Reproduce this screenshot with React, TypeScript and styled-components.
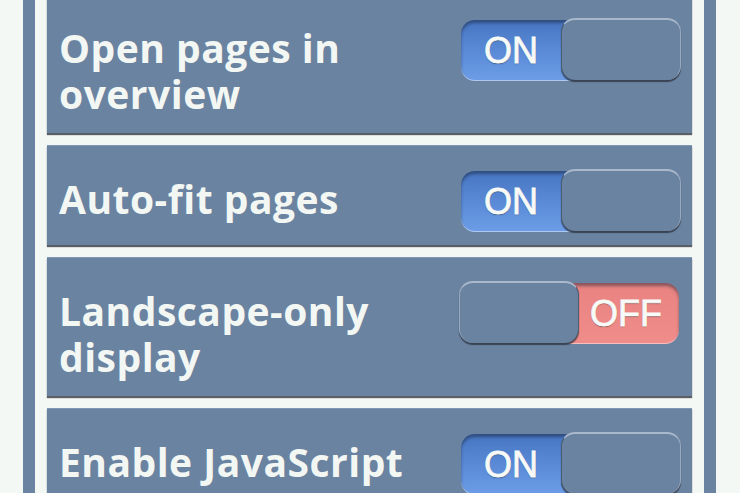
import styled, { createGlobalStyle } from 'styled-components';

const GlobalStyle = createGlobalStyle`
  html, body {
    margin: 0;
    padding: 0;
    background: #f4f8f5;
    overflow: hidden;
  }
  #root {
    height: 493px;
    overflow: hidden;
  }
`;

const Page = styled.div`
  height: 493px;
  margin: 0 24px 0 23px;
  padding: 0 12px;
  border-left: 12px solid #6a83a1;
  border-right: 12px solid #6a83a1;
  background: #f4f8f5;
  overflow: hidden;
`;

const List = styled.div`
  display: flex;
  flex-direction: column;
  gap: 12px;
  margin-top: -6px;
`;

const Card = styled.div`
  display: flex;
  justify-content: space-between;
  align-items: flex-start;
  padding: 24px 11px 13px 12px;
  background: #6a83a1;
  box-shadow: inset 0 1px 0 #8196b0, 0 2px 1px rgba(40, 44, 50, 0.75);
`;

const Label = styled.div`
  padding: 7px 0 3px;
  font-family: 'Open Sans', 'Noto Sans', sans-serif;
  font-weight: 700;
  font-size: 39px;
  letter-spacing: 0.5px;
  line-height: 46px;
  color: #f3f7f3;
  max-width: 380px;
`;

const Switch = styled.div<{ $on: boolean }>`
  display: flex;
  flex-direction: ${({ $on }) => ($on ? 'row' : 'row-reverse')};
  align-items: flex-start;
  flex: none;
  width: 220px;
  height: 63px;
  margin-right: ${({ $on }) => ($on ? '0' : '2px')};
`;

const Track = styled.div<{ $on: boolean }>`
  position: relative;
  z-index: 0;
  width: 110px;
  height: 61px;
  margin-top: 2px;
  box-sizing: border-box;
  display: flex;
  align-items: center;
  justify-content: ${({ $on }) => ($on ? 'flex-start' : 'flex-end')};
  padding: ${({ $on }) => ($on ? '0 0 0 23px' : '0 17px 0 0')};
  border-radius: ${({ $on }) => ($on ? '14px 0 0 14px' : '0 14px 14px 0')};
  background: ${({ $on }) =>
    $on
      ? 'linear-gradient(180deg, #4674c0 0%, #5a8ad6 50%, #6c9de6 100%)'
      : 'linear-gradient(180deg, #e88381 0%, #f08c89 100%)'};
  box-shadow: inset 0 3px 3px rgba(20, 30, 50, 0.45),
    inset 0 -1px 0 rgba(255, 255, 255, 0.45);
  font-family: 'Liberation Sans', Arial, sans-serif;
  font-size: 36px;
  color: #f8faf8;
  text-shadow: 0 1px 1px rgba(0, 0, 0, 0.45);
  -webkit-text-stroke: 0.8px #f8faf8;
`;

const Knob = styled.div<{ $on: boolean }>`
  position: relative;
  z-index: 1;
  width: 120px;
  height: 62px;
  box-sizing: border-box;
  margin-left: ${({ $on }) => ($on ? '-10px' : '0')};
  margin-right: ${({ $on }) => ($on ? '0' : '-10px')};
  border-radius: 14px;
  background: #6a83a1;
  border-top: 2px solid #a9b8cb;
  border-left: 1px solid ${({ $on }) => ($on ? '#4b5d73' : '#9aabc0')};
  border-right: 1px solid ${({ $on }) => ($on ? '#9aabc0' : '#4b5d73')};
  box-shadow: 0 2px 1px rgba(35, 40, 50, 0.7);
`;

type Setting = { label: string; on: boolean };

const settings: Setting[] = [
  { label: 'Open pages in overview', on: true },
  { label: 'Auto-fit pages', on: true },
  { label: 'Landscape-only display', on: false },
  { label: 'Enable JavaScript', on: true },
];

function Toggle({ on }: { on: boolean }) {
  return (
    <Switch $on={on}>
      <Track $on={on}>{on ? 'ON' : 'OFF'}</Track>
      <Knob $on={on} />
    </Switch>
  );
}

export default function App() {
  return (
    <>
      <GlobalStyle />
      <Page>
        <List>
          {settings.map((s) => (
            <Card key={s.label}>
              <Label>{s.label}</Label>
              <Toggle on={s.on} />
            </Card>
          ))}
        </List>
      </Page>
    </>
  );
}
